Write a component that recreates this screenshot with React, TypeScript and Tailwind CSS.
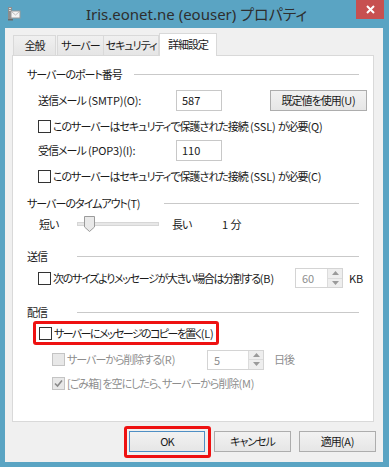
import React from "react";

const font = "[font-family:'Noto_Sans_CJK_JP','Noto_Sans',sans-serif] [font-feature-settings:'palt']";

function L({ children }: { children: React.ReactNode }) {
  return <span className="tracking-[-0.2px]">{children}</span>;
}

function CheckBox({ disabled, checked }: { disabled?: boolean; checked?: boolean }) {
  return (
    <span
      className={
        "w-[13px] h-[13px] shrink-0 flex items-center justify-center border " +
        (disabled ? "border-[#c4c4c4] bg-[#e8e8e8]" : "border-[#333333] bg-white")
      }
    >
      {checked && (
        <svg width="9" height="9" viewBox="0 0 9 9">
          <path d="M1 4.5 L3.5 7 L8 1.5" fill="none" stroke="#8a8a8a" strokeWidth="1.6" />
        </svg>
      )}
    </span>
  );
}

function Header({ children, w, className = "" }: { children: React.ReactNode; w: string; className?: string }) {
  return (
    <div className={"flex items-center h-[16px] pl-[14px] pr-[14px] " + className}>
      <span className={"shrink-0 whitespace-nowrap " + w}>{children}</span>
      <div className="flex-1 h-px bg-[#c9c9c9]" />
    </div>
  );
}

function Spinner({ value, w }: { value: string; w: string }) {
  return (
    <div className={"h-[20px] shrink-0 flex border border-[#d4d4d4] bg-white " + w}>
      <div className="flex-1 pl-[6px] text-[#8e8e8e] leading-[18px] tracking-normal">{value}</div>
      <div className="w-[15px] flex flex-col border-l border-[#dcdcdc]">
        <div className="flex-1 flex items-center justify-center bg-[#eeeeee] border-b border-[#dcdcdc]">
          <svg width="7" height="4" viewBox="0 0 7 4"><path d="M0 4 L3.5 0 L7 4Z" fill="#9a9a9a" /></svg>
        </div>
        <div className="flex-1 flex items-center justify-center bg-[#eeeeee]">
          <svg width="7" height="4" viewBox="0 0 7 4"><path d="M0 0 L3.5 4 L7 0Z" fill="#9a9a9a" /></svg>
        </div>
      </div>
    </div>
  );
}

function Btn({ children, def, className = "" }: { children: React.ReactNode; def?: boolean; className?: string }) {
  return (
    <div
      className={
        "w-[76px] h-[21px] shrink-0 flex items-center justify-center border bg-gradient-to-b from-[#f2f2f2] to-[#e6e6e6] text-[#1a1a1a] " +
        (def ? "border-[#4f8fc4]" : "border-[#adadad]") +
        " " +
        className
      }
    >
      {children}
    </div>
  );
}

export default function App() {
  return (
    <div className={"w-[389px] h-[467px] bg-[#5aa4c3] flex flex-col text-[11px] tracking-[-1px] text-[#1a1a1a] " + font}>
      {/* Title bar */}
      <div className="h-[28px] relative flex items-center">
        <div className="absolute left-[7px] top-[7px]">
          <svg width="14" height="14" viewBox="0 0 14 14">
            <rect x="1" y="0" width="4" height="12" fill="#8d8d8d" />
            <rect x="2" y="1" width="2" height="1" fill="#dcdcdc" />
            <rect x="2" y="3" width="2" height="1" fill="#dcdcdc" />
            <rect x="4" y="4" width="9" height="7" fill="#f4f4f4" stroke="#9a9a9a" strokeWidth="1" />
            <path d="M5 5 L8.5 8 L12 5" fill="none" stroke="#b0b0b0" strokeWidth="0.8" />
            <rect x="1" y="12" width="5" height="1.5" fill="#6a6a6a" />
          </svg>
        </div>
        <div className="flex-1 text-center text-[15px] tracking-normal text-[#2e2e2e] [font-family:'Noto_Sans','Noto_Sans_CJK_JP',sans-serif] leading-[28px] pl-[4px]">
          Iris.eonet.ne (eouser) プロパティ
        </div>
        <div className="absolute right-[5px] top-0 w-[28px] h-[19px] bg-[#c75050] flex items-center justify-center">
          <svg width="9" height="9" viewBox="0 0 9 9">
            <path d="M1 1 L8 8 M8 1 L1 8" stroke="white" strokeWidth="2" />
          </svg>
        </div>
      </div>

      {/* Client area */}
      <div className="ml-[5px] mr-[6px] mb-[5px] flex-1 bg-[#f0f0f0] flex flex-col pt-[5px]">
        {/* Tabs */}
        <div className="h-[22px] flex items-end pl-[8px]">
          <div className="w-[43px] h-[20px] border border-b-0 border-[#d9d9d9] bg-gradient-to-b from-[#f0f0f0] to-[#e5e5e5] flex items-center justify-center">全般</div>
          <div className="w-[47px] h-[20px] ml-[1px] border border-b-0 border-[#d9d9d9] bg-gradient-to-b from-[#f0f0f0] to-[#e5e5e5] flex items-center justify-center">サーバー</div>
          <div className="w-[55px] h-[20px] border border-b-0 border-l-0 border-[#d9d9d9] bg-gradient-to-b from-[#f0f0f0] to-[#e5e5e5] flex items-center justify-center">セキュリティ</div>
          <div className="w-[58px] h-[23px] mb-[-1px] relative z-10 border border-b-0 border-[#d9d9d9] bg-white flex items-center justify-center pb-[2px]">詳細設定</div>
        </div>

        {/* Panel */}
        <div className="ml-[7px] mr-[9px] h-[367px] bg-white border border-[#d9d9d9] flex flex-col pt-[10px]">
          <Header w="w-[107px]">サーバーのポート番号</Header>

          <div className="h-[21px] mt-[8px] flex items-center pl-[25px]">
            <span className="w-[138px] whitespace-nowrap">送信メール<L> (SMTP)(O):</L></span>
            <div className="w-[46px] h-[21px] border border-[#c8c8c8] bg-white pl-[5px] leading-[19px] tracking-normal">587</div>
            <Btn className="ml-[48px] w-[97px]">既定値を使用<L>(U)</L></Btn>
          </div>

          <div className="h-[16px] mt-[7px] flex items-center pl-[25px] gap-[2px]">
            <CheckBox />
            <span className="whitespace-nowrap">このサーバーはセキュリティで保護された接続<L> (SSL) </L>が必要<L>(Q)</L></span>
          </div>

          <div className="h-[21px] mt-[6px] flex items-center pl-[25px]">
            <span className="w-[138px] whitespace-nowrap">受信メール<L> (POP3)(I):</L></span>
            <div className="w-[46px] h-[21px] border border-[#c8c8c8] bg-white pl-[5px] leading-[19px] tracking-normal">110</div>
          </div>

          <div className="h-[16px] mt-[7px] flex items-center pl-[25px] gap-[2px]">
            <CheckBox />
            <span className="whitespace-nowrap">このサーバーはセキュリティで保護された接続<L> (SSL) </L>が必要<L>(C)</L></span>
          </div>

          <Header w="w-[137px]" className="mt-[11px]">サーバーのタイムアウト<L>(T)</L></Header>

          <div className="h-[16px] mt-[5px] flex items-center pl-[26px]">
            <span className="w-[38px]">短い</span>
            <div className="w-[82px] h-[16px] flex items-center relative">
              <div className="w-full h-[4px] bg-[#e7e7e7] border border-[#d6d6d6]" />
              <svg className="absolute left-[7px] top-0" width="11" height="16" viewBox="0 0 11 16">
                <path d="M0.5 0.5 H10.5 V11 L5.5 15.5 L0.5 11 Z" fill="#e9e9e9" stroke="#9b9b9b" />
              </svg>
            </div>
            <span className="ml-[13px] w-[50px]">長い</span>
            <span className="tracking-normal">1 分</span>
          </div>

          <Header w="w-[50px]" className="mt-[16px]">送信</Header>

          <div className="h-[20px] mt-[4px] flex items-center pl-[25px]">
            <CheckBox />
            <span className="ml-[2px] w-[242px] whitespace-nowrap tracking-[-1.3px]">次のサイズよりメッセージが大きい場合は分割する<L>(B)</L></span>
            <Spinner value="60" w="w-[48px]" />
            <span className="ml-[6px] tracking-normal">KB</span>
          </div>

          <Header w="w-[50px]" className="mt-[16px]">配信</Header>

          <div className="mt-[1px] ml-[20px] w-[186px] h-[24px] border-[3px] border-[#ee1111] rounded-[3px] flex items-center pl-[3px] gap-[2px]">
            <CheckBox />
            <span className="whitespace-nowrap tracking-[-1.6px]">サーバーにメッセージのコピーを置く<L>(L)</L></span>
          </div>

          <div className="h-[19px] mt-[5px] flex items-center pl-[39px]">
            <CheckBox disabled />
            <span className="ml-[2px] w-[140px] whitespace-nowrap text-[#8e8e8e]">サーバーから削除する<L>(R)</L></span>
            <Spinner value="5" w="w-[57px]" />
            <span className="ml-[10px] text-[#8e8e8e]">日後</span>
          </div>

          <div className="h-[16px] mt-[6px] flex items-center pl-[39px] gap-[2px]">
            <CheckBox disabled checked />
            <span className="whitespace-nowrap text-[#8e8e8e]">[ごみ箱] を空にしたら、サーバーから削除<L>(M)</L></span>
          </div>
        </div>

        {/* Buttons */}
        <div className="mt-[4px] flex items-start pl-[119px]">
          <div className="w-[87px] h-[32px] border-[3px] border-[#ee1111] rounded-[3px] p-[2px]">
            <Btn def>OK</Btn>
          </div>
          <Btn className="ml-[3px] mt-[5px] w-[77px]">キャンセル</Btn>
          <Btn className="ml-[8px] mt-[5px] w-[77px]">適用<L>(A)</L></Btn>
        </div>
      </div>
    </div>
  );
}
